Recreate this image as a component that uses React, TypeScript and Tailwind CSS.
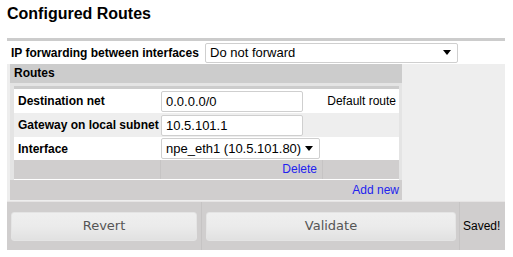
import React from "react";

function Arrow() {
  return (
    <svg width="8" height="5" viewBox="0 0 8 5" className="shrink-0">
      <path d="M0 0H8L4 5Z" fill="#000" />
    </svg>
  );
}

function TextBox({ value }: { value: string }) {
  return (
    <div className="w-[142px] h-[21px] bg-white border border-[#cfcfcf] rounded-[2px] pl-[4px] text-[13px] leading-[19px]">
      {value}
    </div>
  );
}

function Btn({ label, width }: { label: string; width: string }) {
  return (
    <div
      className={`${width} h-[29px] rounded-[3px] border border-[#e4e4e4] bg-gradient-to-b from-[#efefef] via-[#ebebeb] to-[#e1e1e1] flex items-center justify-center text-[13px] text-[#555] font-['DejaVu_Sans',Verdana,sans-serif]`}
    >
      {label}
    </div>
  );
}

export default function App() {
  return (
    <div className="w-[513px] h-[257px] bg-white text-black font-['Liberation_Sans',Arial,sans-serif] overflow-hidden">
      <div className="pt-[5px] pl-[7px] text-[16px] font-bold leading-[18px]">Configured Routes</div>

      <div className="ml-[7px] mt-[15px] w-[498px] border-t-[3px] border-[#cccccc]">
        {/* IP forwarding */}
        <div className="h-[23px] flex items-center">
          <div className="w-[198px] pl-[4px] text-[12px] font-bold">IP forwarding between interfaces</div>
          <div className="w-[253px] h-[20px] bg-white border border-[#cfcfcf] rounded-[2px] flex items-center justify-between pl-[4px] pr-[6px] text-[13px]">
            <span>Do not forward</span>
            <Arrow />
          </div>
        </div>

        {/* Routes area */}
        <div className="bg-[#eeeeee] pl-[3px] h-[137px]">
          <div className="w-[392px]">
            <div className="h-[19px] bg-[#cccccc] pl-[4px] text-[12px] font-bold leading-[19px]">Routes</div>
            <div className="bg-[#e4e4e4] pl-[4px] pr-[3px] pt-[3px]">
              <div className="border-t-[3px] border-[#cccccc] border-b border-b-white text-[12px]">
                <div className="h-[24px] bg-white flex items-center">
                  <div className="w-[147px] pl-[4px] font-bold">Destination net</div>
                  <TextBox value="0.0.0.0/0" />
                  <div className="flex-1 text-right pr-[3px]">Default route</div>
                </div>
                <div className="h-[24px] bg-[#eeeeee] flex items-center">
                  <div className="w-[147px] pl-[4px] font-bold">Gateway on local subnet</div>
                  <TextBox value="10.5.101.1" />
                </div>
                <div className="h-[23px] bg-white flex items-center">
                  <div className="w-[147px] pl-[4px] font-bold">Interface</div>
                  <div className="w-[159px] h-[21px] bg-white border border-[#cfcfcf] rounded-[2px] flex items-center justify-between pl-[4px] pr-[6px] text-[13px]">
                    <span>npe_eth1 (10.5.101.80)</span>
                    <Arrow />
                  </div>
                </div>
                <div className="h-[19px] bg-[#d0cece] flex">
                  <div className="w-[147px] border-r border-[#c6c4c4]" />
                  <div className="w-[162px] border-r border-[#c6c4c4] text-right pr-[5px] leading-[19px] text-[#2222ee]">Delete</div>
                  <div className="flex-1" />
                </div>
              </div>
            </div>
            <div className="h-[20px] bg-[#d0cece] text-right pr-[3px] leading-[20px] text-[12px] text-[#2222ee]">Add new</div>
          </div>
        </div>

        {/* Buttons */}
        <div className="h-[49px] bg-[#d0cece] border-t border-[#e6e4e4] flex">
          <div className="w-[195px] pl-[4px] flex items-center border-r border-[#c6c4c4]">
            <Btn label="Revert" width="w-[186px]" />
          </div>
          <div className="w-[258px] pl-[4px] flex items-center border-r border-[#c6c4c4]">
            <Btn label="Validate" width="w-[250px]" />
          </div>
          <div className="flex-1 pl-[3px] flex items-center text-[12px]">Saved!</div>
        </div>
      </div>
    </div>
  );
}
